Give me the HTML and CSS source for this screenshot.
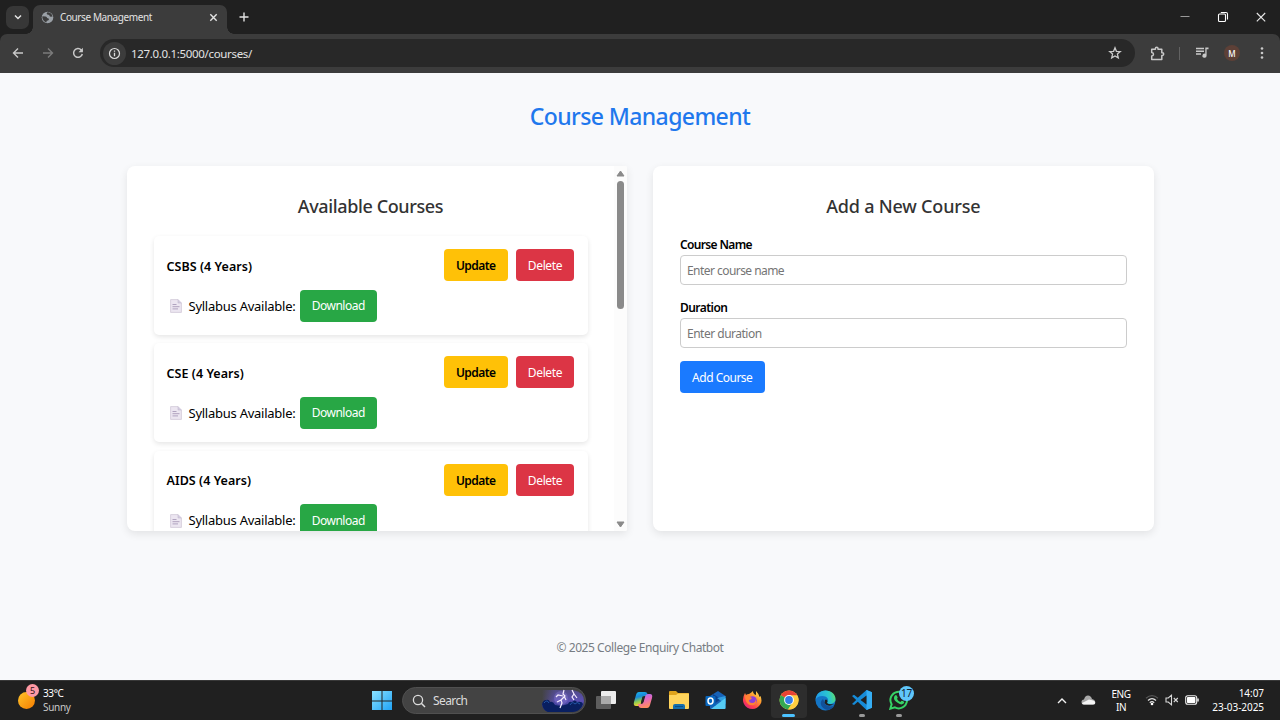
FILE: index.html
```html
<!DOCTYPE html>
<html lang="en">
<head>
<meta charset="utf-8">
<title>Course Management</title>
<link rel="stylesheet" href="styles.css">
</head>
<body>
<div class="screen">
  <div class="tabstrip">
    <div class="tab-search"><svg width="10" height="10" viewBox="0 0 10 10"><path d="M2 3.500l3 3 3-3" fill="none" stroke="#e3e3e3" stroke-width="1.500"/></svg></div>
    <div class="tab">
      <svg class="favicon" width="13" height="13" viewBox="0 0 13 13"><circle cx="6.500" cy="6.500" r="5.800" fill="#9aa0a6"/><path d="M1.500 5.300l3 .2q1.700.2 1.500 1.500l1.600.4q1 1.200-.5 2l-1.300.3-.5 1.700Q1.500 10 1.300 6zM6 1.500q-.8 1.700.3 2.100l1.900.3q.3 1.700 1.500 1.800l1.900-.2Q10.500 1.800 7.200 1.300z" fill="#3c3c3c"/></svg>
      <span class="tab-title">Course Management</span>
      <svg class="tab-close" width="9" height="9" viewBox="0 0 9 9"><path d="M1.300 1.300l6.400 6.400M7.700 1.300L1.300 7.700" stroke="#e3e3e3" stroke-width="1.400"/></svg>
    </div>
    <svg class="new-tab" width="10" height="10" viewBox="0 0 10 10"><path d="M5 .5v9M.5 5h9" stroke="#e3e3e3" stroke-width="1.400"/></svg>
    <div class="win-controls">
      <svg width="12" height="12" viewBox="0 0 12 12"><path d="M1.500 5.500h9" stroke="#999"/></svg>
      <svg width="12" height="12" viewBox="0 0 12 12"><rect x="1.500" y="3" width="7" height="7.500" rx="1" fill="none" stroke="#fff" stroke-width="1.100"/><path d="M3.800 1.500h5.200a1.500 1.500 0 0 1 1.500 1.500v5.500" fill="none" stroke="#fff" stroke-width="1.100"/></svg>
      <svg width="12" height="12" viewBox="0 0 12 12"><path d="M1.800 2l8.400 8.400M10.200 2L1.800 10.400" stroke="#e8e8e8" stroke-width="1.100"/></svg>
    </div>
  </div>
  <div class="toolbar">
    <div class="nav-icons">
      <svg width="12" height="12" viewBox="0 0 12 12"><path d="M11 6H1.500M6 1.500L1.500 6 6 10.500" fill="none" stroke="#c9c9c9" stroke-width="1.400"/></svg>
      <svg width="12" height="12" viewBox="0 0 12 12"><path d="M1 6h9.500M6 1.500L10.500 6 6 10.500" fill="none" stroke="#7b7b7b" stroke-width="1.400"/></svg>
      <svg width="12" height="12" viewBox="0 0 12 12"><path d="M10.300 7A4.400 4.400 0 1 1 9.200 2.900L10.500 4.200" fill="none" stroke="#c9c9c9" stroke-width="1.500"/><path d="M10.900 .8v4.400H6.500z" fill="#c9c9c9"/></svg>
    </div>
    <div class="address">
      <span class="site-info"><svg width="13" height="13" viewBox="0 0 13 13"><circle cx="6.500" cy="6.500" r="5" fill="none" stroke="#dedede" stroke-width="1.200"/><path d="M6.500 5.800v3.500M6.500 3.500v1.300" stroke="#dedede" stroke-width="1.300"/></svg></span>
      <span class="url">127.0.0.1:5000/courses/</span>
      <svg class="star" width="14" height="14" viewBox="0 0 14 14"><path d="M7 1.800l1.400 3.500 3.900.3-2.900 2.500.9 3.800L7 9.900l-3.300 2 .9-3.800-2.900-2.500 3.900-.3z" fill="none" stroke="#c9c9c9" stroke-width="1.300"/></svg>
    </div>
    <div class="tools">
      <svg width="15" height="15" viewBox="0 0 15 15"><path d="M1.700 3.200h3.700v-.6a1.300 1.300 0 0 1 2.600 0v.6h3.800v3.600h.6a1.300 1.300 0 0 1 0 2.600h-.6v4H1.700v-3.400c2.400-.3 2.400-3.200 0-3.500z" fill="none" stroke="#c9c9c9" stroke-width="1.500" stroke-linejoin="round"/></svg>
      <span class="divider"></span>
      <svg class="media" width="14" height="14" viewBox="0 0 14 14"><path d="M1 2.500h8M1 5.200h8M1 7.900h5" stroke="#c9c9c9" stroke-width="1.500"/><path d="M10.300 1.500h3.200v1.700h-1.900v6.500a2.100 2.100 0 1 1-1.300-1.900z" fill="#c9c9c9"/></svg>
      <span class="profile">M</span>
      <svg class="kebab" width="4" height="14" viewBox="0 0 4 14"><g fill="#c9c9c9"><circle cx="2" cy="2.500" r="1.300"/><circle cx="2" cy="7" r="1.300"/><circle cx="2" cy="11.500" r="1.300"/></g></svg>
    </div>
  </div>

  <main class="page">
    <h1 class="page-title">Course Management</h1>
    <div class="columns">
      <section class="card courses">
        <div class="course-list">
          <h2 class="card-title">Available Courses</h2>
          <article class="course">
            <div class="course-head"><strong class="course-name">CSBS (4 Years)</strong><button class="btn update">Update</button><button class="btn delete">Delete</button></div>
            <div class="syllabus"><svg class="doc" width="12" height="14" viewBox="0 0 12 14"><g id="document"><path d="M.6.600h7.400l3.400 3.400v9.400H.600z" fill="#ece6f1" stroke="#d0c8d8" stroke-width=".8"/><path d="M8 .600v3.400h3.400" fill="#d5cce0" stroke="#c5bcd0" stroke-width=".6"/><path d="M2.500 5.500h4M2.500 7.700h7M2.500 9.900h5.500" stroke="#a99bb9" stroke-width=".9"/></g></svg><span class="syllabus-text">Syllabus Available:</span><button class="btn download">Download</button></div>
          </article>
          <article class="course">
            <div class="course-head"><strong class="course-name">CSE (4 Years)</strong><button class="btn update">Update</button><button class="btn delete">Delete</button></div>
            <div class="syllabus"><svg class="doc" width="12" height="14" viewBox="0 0 12 14"><use href="#document"/></svg><span class="syllabus-text">Syllabus Available:</span><button class="btn download">Download</button></div>
          </article>
          <article class="course">
            <div class="course-head"><strong class="course-name">AIDS (4 Years)</strong><button class="btn update">Update</button><button class="btn delete">Delete</button></div>
            <div class="syllabus"><svg class="doc" width="12" height="14" viewBox="0 0 12 14"><use href="#document"/></svg><span class="syllabus-text">Syllabus Available:</span><button class="btn download">Download</button></div>
          </article>
        </div>
        <div class="scrollbar">
          <svg width="9" height="8" viewBox="0 0 9 8"><path d="M4.500 1L8 6H1z" fill="#8a8a8a" stroke="#8a8a8a" stroke-linejoin="round"/></svg>
          <span class="thumb"></span>
          <svg class="arrow-down" width="9" height="8" viewBox="0 0 9 8"><path d="M4.500 7L8 2H1z" fill="#8a8a8a" stroke="#8a8a8a" stroke-linejoin="round"/></svg>
        </div>
      </section>
      <section class="card form-card">
        <h2 class="card-title">Add a New Course</h2>
        <form class="course-form">
          <label class="label label-name" for="name">Course Name</label>
          <input class="input input-name" id="name" placeholder="Enter course name">
          <label class="label label-duration" for="duration">Duration</label>
          <input class="input input-duration" id="duration" placeholder="Enter duration">
          <button class="btn add" type="button">Add Course</button>
        </form>
      </section>
    </div>
    <footer class="footer">© 2025 College Enquiry Chatbot</footer>
  </main>

  <div class="taskbar">
    <div class="weather">
      <div class="sun"><span class="badge">5</span></div>
      <div class="weather-text"><span class="temp">33°C</span><span class="sky">Sunny</span></div>
    </div>
    <div class="apps">
      <svg class="start" width="20" height="20" viewBox="0 0 20 20"><defs><linearGradient id="win" x2="1" y2="1"><stop stop-color="#8be2ff"/><stop offset="1" stop-color="#1fa2f5"/></linearGradient></defs><path d="M0 0h9.500v9.500H0zM10.500 0H20v9.500h-9.500zM0 10.500h9.500V19H0zM10.500 10.500H20V19h-9.500z" fill="url(#win)"/></svg>
      <div class="search">
        <svg width="14" height="14" viewBox="0 0 14 14"><circle cx="6" cy="6" r="4.600" fill="none" stroke="#ddd" stroke-width="1.300"/><path d="M9.300 9.300L13 13" stroke="#ddd" stroke-width="1.500"/></svg>
        <span class="search-text">Search</span>
        <svg class="storm" width="42" height="24" viewBox="0 0 42 24"><defs><linearGradient id="night" x2="0" y2="1"><stop stop-color="#514b86"/><stop offset=".5" stop-color="#5b50b5"/><stop offset="1" stop-color="#18276e"/></linearGradient><linearGradient id="fade"><stop stop-color="#434343"/><stop offset="1" stop-color="#434343" stop-opacity="0"/></linearGradient></defs><path d="M0 1h31q11 2 11 11t-11 11H6q-6-2-6-9z" fill="url(#night)"/><path d="M0 0h14v14H0z" fill="url(#fade)"/><circle cx="19" cy="9" r="7" fill="#9385d8" opacity=".35"/><path d="M0 15q1-4 4-4 3-1 4 2 3-1 5 3 6 2 13-1 1-3 4-2 3-3 5 0 5-1 6 2-2 7-11 8H6q-5-2-6-8" fill="#091f60"/><path d="M2 14q3-4 5 0M28 16q2-4 5-1 2-3 5 0" stroke="#2457a7" fill="none"/><path d="M22 1l-1 4 2 2-4 4 1 3-2 5M21 7l-5-1-2 2M19 11l-4 2M22 7l2 4M30 1l2 4-2 3 2 3M32 5l3 4" fill="none" stroke="#f6edff" stroke-width="1.200"/></svg>
      </div>
      <span class="app"><svg width="22" height="20" viewBox="0 0 22 20"><rect x="6" y="1" width="15" height="13" rx="1" fill="#ececec"/><rect x="1" y="6" width="15" height="13" rx="1" fill="#696969" opacity=".85"/><path d="M6 6h10v8H6z" fill="#aaa"/></svg></span>
      <span class="app"><svg width="20" height="20" viewBox="0 0 20 20"><defs><linearGradient id="cpa" x2=".3" y2="1"><stop stop-color="#1cb8ed"/><stop offset=".4" stop-color="#1789d9"/><stop offset=".7" stop-color="#8acb54"/><stop offset="1" stop-color="#ffd02f"/></linearGradient><linearGradient id="cpb" x2=".3" y2="1"><stop stop-color="#9970ff"/><stop offset=".5" stop-color="#e568bd"/><stop offset="1" stop-color="#ff8a61"/></linearGradient></defs><path d="M6 2h6q2 0 2.500 2l.7 2H12q-2 0-2.600 2L8 13q-.7 3-3 3H3q-3 0-2-4l2-7q.700-3 3-3z" fill="url(#cpa)"/><path d="M14 18H8q-2 0-2.500-2L5 14h3q2 0 2.600-2L12 7q.700-3 3-3h2q3 0 2 4l-2 7q-.7 3-3 3z" fill="url(#cpb)"/><path d="M9.500 6.500h2L9.800 13H7.900z" fill="#252525"/></svg></span>
      <span class="app"><svg width="22" height="20" viewBox="0 0 22 20"><path d="M1 2q0-1 1-1h6l2 2h10q1 0 1 1v14H1z" fill="#dfa31c"/><path d="M1 5h7l2-1.500h11V18q0 1-1 1H2q-1 0-1-1z" fill="#ffd45c"/><path d="M5 19v-3q0-2 2-2h8q2 0 2 2v3z" fill="#166fad"/><path d="M7 16h8v1H7z" fill="#0b4f87"/></svg></span>
      <span class="app"><svg width="21" height="20" viewBox="0 0 21 20"><path d="M5 6l8-5 7.500 5v12q0 1-1 1H6q-1 0-1-1z" fill="#1762b7"/><path d="M8 4l8 5-8 6z" fill="#0b418e"/><path d="M12 8l8.500-2v8z" fill="#2e9cdf"/><path d="M6 19l14.500-11v10q0 1-1 1z" fill="#55cbf4"/><rect x=".5" y="6" width="10" height="10" rx="1" fill="#0866bd"/><ellipse cx="5.500" cy="11" rx="2.500" ry="2.900" fill="none" stroke="#fff" stroke-width="1.500"/></svg></span>
      <span class="app"><svg width="20" height="20" viewBox="0 0 20 20"><defs><linearGradient id="fx" x1="1" x2=".2" y2="1"><stop stop-color="#fff36a"/><stop offset=".4" stop-color="#ff9a2c"/><stop offset=".75" stop-color="#ff3d4f"/><stop offset="1" stop-color="#dc247f"/></linearGradient></defs><path d="M3 3l1 2q1-1 3-1 2-1 4-3 0 3 3 4V1q3 3 3.500 6l1-1q2 5 0 8-3 5-8 5-6 0-8.500-5Q-.5 9 3 3z" fill="url(#fx)"/><circle cx="10.500" cy="10.500" r="4.300" fill="#8b3fda"/><path d="M3 6q3-2 5 1l2 1q-1 2-3 2 0 3 3 3 4 0 3.500-4 2 4-1.500 6-4 1-6-1-3-3-3-8" fill="#ff8234"/></svg></span>
      <span class="app active"><svg width="20" height="20" viewBox="0 0 20 20"><circle cx="10" cy="10" r="9.500" fill="#ffcd40"/><path d="M10 10L1.800 5.200A9.500 9.500 0 0 1 18.200 5.200z" fill="#e94335"/><path d="M10 10L1.800 5.200A9.500 9.500 0 0 0 9 19.500L14 12z" fill="#34a853"/><path d="M10 5.300h8.300A9.500 9.500 0 0 1 9 19.500L14 12z" fill="#ffcd40"/><circle cx="10" cy="10" r="4.900" fill="#fff"/><circle cx="10" cy="10" r="3.900" fill="#347de9"/></svg></span>
      <span class="app"><svg width="21" height="21" viewBox="0 0 21 21"><defs><linearGradient id="edge" y1=".2" x2="1"><stop stop-color="#209ce9"/><stop offset=".6" stop-color="#2bc7cf"/><stop offset="1" stop-color="#66e15b"/></linearGradient></defs><circle cx="10.500" cy="10.500" r="10" fill="#1475c5"/><path d="M.500 10C1 4 5 .500 10.500.500c6 0 10 4 10 8.500 0 3.500-3 5-6 5-2 0-3-1-2-2 2-3-1-6-5-6-3.500 0-6 1.500-7 4z" fill="url(#edge)"/><path d="M8 9c-5 4-1 10 5 11 3-.5 5-2 6.500-4.500C14 18 9 15 9 11z" fill="#125199"/><path d="M10 10q1-1 2 0 1 1 0 3 2 2 7 1-6 4-9.500-1z" fill="#202020"/></svg></span>
      <span class="app running"><svg width="20" height="20" viewBox="0 0 20 20"><path d="M14.500 0L20 2.300v15.400L14.500 20 5.800 11.800 2 15 0 14l4.200-4L0 6l2-1.300 3.800 3z" fill="#168bd8"/><path d="M14.500 0L20 2.300v15.400L14.500 20z" fill="#36aef4"/><path d="M14.500 5.500v9L8.500 10z" fill="#202020"/></svg></span>
      <span class="app running whatsapp"><svg width="20" height="20" viewBox="0 0 20 20"><path d="M1.300 18.700l1.300-4.400a8.300 8.300 0 1 1 3.300 3.100z" fill="#202020" stroke="#36d366" stroke-width="2"/><path d="M6 5.500q1-1 1.700 0l1 2q0 .8-.8 1.300 1.300 2.500 3.500 3.200l1-1q.7-.5 2.600.8.700.700-.4 1.800-2 2-6-.8T5 8q0-1.800 1-2.500z" fill="#36d366"/></svg><span class="count">17</span></span>
    </div>
    <div class="tray">
      <svg class="chevron" width="10" height="8" viewBox="0 0 10 8"><path d="M1 6l4-4 4 4" fill="none" stroke="#f1f1f1" stroke-width="1.400"/></svg>
      <svg class="cloud" width="15" height="10" viewBox="0 0 15 10"><path d="M3 9.500Q.5 9.500.5 7T3 4.500Q4 .500 7 .500t4 3.500q3 .5 3.300 3 0 2.500-2.300 2.500z" fill="#a9a9a9"/><path d="M1 8l5-2.500 2-1 4 1q2.500.5 2.300 2.500Q14 9.500 12 9.500H3Q1.300 9.500 1 8z" fill="#f5f5f5"/></svg>
      <div class="lang"><span>ENG</span><span>IN</span></div>
      <div class="status">
        <svg width="14" height="12" viewBox="0 0 14 12"><path d="M1 4.300q6-5.300 12 0" fill="none" stroke="#555" stroke-width="1.200"/><path d="M3 6.500q4-3.800 8 0M4.800 8.700q2.200-2 4.400 0" fill="none" stroke="#e3e3e3" stroke-width="1.200"/><circle cx="7" cy="10" r="1.300" fill="#fff"/></svg>
        <svg width="14" height="12" viewBox="0 0 14 12"><path d="M1 4h2.300L6.500 1.200v9.600L3.300 8H1z" fill="none" stroke="#d8d8d8" stroke-width="1.100"/><path d="M8.800 4l4 4M12.800 4l-4 4" stroke="#d8d8d8" stroke-width="1.100"/></svg>
        <svg width="14" height="12" viewBox="0 0 14 12"><rect x=".7" y="1.700" width="11" height="8.600" rx="2" fill="none" stroke="#eee" stroke-width="1.100"/><rect x="2" y="3" width="8.400" height="6" rx=".8" fill="#fff"/><path d="M13 4.500v3" stroke="#eee" stroke-width="1.500"/></svg>
      </div>
      <div class="clock"><span class="time">14:07</span><span class="date">23-03-2025</span></div>
    </div>
  </div>
</div>
</body>
</html>
```
FILE: styles.css
```css
* { box-sizing: border-box; }
body { margin: 0; background: #202020; font-family: "Noto Sans", "Open Sans", sans-serif; }
svg { display: block; flex-shrink: 0; }
.screen { width: 1280px; height: 720px; display: flex; flex-direction: column; overflow: hidden; }

/* Browser frame */
.tabstrip { height: 34px; display: flex; align-items: center; padding: 0 13px 0 6px; background: #202020; }
.tab-search { width: 23px; height: 23px; border-radius: 7px; background: #373737; display: grid; place-items: center; }
.tab { position: relative; align-self: flex-end; width: 194px; height: 29px; margin-left: 4px; padding: 0 9px 5px 8px; display: flex; align-items: center; background: #3c3c3c; border-radius: 7px 7px 0 0; color: #e3e3e3; font-size: 10px; }
.tab::before, .tab::after { content: ""; position: absolute; bottom: 0; width: 7px; height: 7px; }
.tab::before { left: -7px; background: radial-gradient(circle at 0 0, transparent 6.500px, #3c3c3c 7px); }
.tab::after { right: -7px; background: radial-gradient(circle at 100% 0, transparent 6.500px, #3c3c3c 7px); }
.tab-title { margin-left: 6px; letter-spacing: -.4px; }
.tab-close { margin-left: auto; }
.new-tab { margin-left: 12px; }
.win-controls { margin-left: auto; display: flex; gap: 26px; }
.toolbar { height: 39px; display: flex; align-items: center; background: #3c3c3c; border-radius: 7px 7px 0 0; padding: 0 16px 1px 12px; }
.nav-icons { display: flex; gap: 18px; margin-right: 16px; }
.address { width: 1035px; height: 28px; border-radius: 14px; background: #282828; display: flex; align-items: center; padding: 0 13px 0 3px; }
.site-info { width: 23px; height: 23px; border-radius: 50%; background: #3c3c3c; display: grid; place-items: center; }
.url { margin-left: 5px; color: #e3e3e3; font-size: 11.500px; letter-spacing: -.33px; }
.star { margin-left: auto; }
.tools { display: flex; align-items: center; margin-left: 15px; }
.divider { width: 1px; height: 13px; margin: 0 15px 0 14px; background: #626262; }
.profile { width: 16px; height: 16px; margin: 0 20px 0 15px; border-radius: 50%; background: #5d4037; color: #fff; display: grid; place-items: center; font-size: 8px; font-weight: 500; }

/* Course page */
.page { height: 607px; flex: none; background: #f8f9fb; display: flex; flex-direction: column; align-items: center; padding-top: 26px; }
.page-title { margin: 0; height: 34px; line-height: 34px; color: #1f78ed; font-size: 23px; font-weight: 500; letter-spacing: -.6px; }
.columns { display: flex; gap: 26px; margin-top: 33px; }
.card { width: 500.500px; height: 365px; border-radius: 8px; background: #fff; box-shadow: 0 3px 9px rgba(0,0,0,.09); }
.courses { display: flex; overflow: hidden; border-radius: 8px 2px 2px 8px; }
.course-list { width: 487px; padding: 26px 26px 0 27px; overflow: hidden; }
.card-title { margin: 0; height: 29px; line-height: 29px; text-align: center; color: #333; font-size: 18px; font-weight: 500; letter-spacing: -.38px; }
.course-list .card-title { margin-bottom: 15px; }
.form-card .card-title { letter-spacing: -.2px; }
.course { height: 99px; margin-bottom: 8.300px; padding: 13px 13.500px 0 13px; border-radius: 5px; box-shadow: 0 2px 5px rgba(0,0,0,.1); }
.course-head { display: flex; align-items: center; }
.course-name { margin-right: auto; padding-top: 2px; font-size: 12.500px; font-weight: 600; letter-spacing: .05px; }
.btn { height: 32px; padding: 0; border: 0; border-radius: 4px; color: #fff; font: 400 12px "Noto Sans", "Open Sans", sans-serif; letter-spacing: -.35px; white-space: nowrap; }
.update { width: 63.500px; padding-top: 1px; background: #ffc107; color: #000; font-weight: 600; letter-spacing: -.55px; }
.delete { width: 58px; padding-top: 1px; margin-left: 8.500px; background: #dc3545; }
.syllabus { display: flex; align-items: center; margin-top: 8.700px; }
.doc { margin: 1px 7px 0 3px; }
.syllabus-text { width: 111px; font-size: 13px; letter-spacing: -.25px; white-space: nowrap; }
.download { width: 77.500px; background: #28a745; letter-spacing: -.5px; }
.scrollbar { width: 13.500px; padding: 4px 0 3px; background: #fcfcfc; display: flex; flex-direction: column; align-items: center; }
.thumb { width: 7px; height: 128px; margin-top: 3px; border-radius: 4px; background: #8a8a8a; }
.arrow-down { margin-top: auto; }
.form-card { padding: 26px 26.500px; }
.course-form { display: flex; flex-direction: column; align-items: flex-start; margin-top: 14px; }
.label { height: 20px; padding-left: .5px; line-height: 19px; font-size: 12px; font-weight: 600; letter-spacing: -.65px; }
.input { width: 100%; height: 30px; padding: 1px 6.500px 0; border: 1px solid #ccc; border-radius: 4px; background: #fff; font: 12px "Noto Sans", "Open Sans", sans-serif; letter-spacing: -.55px; }
.input::placeholder { color: #757575; }
.label-duration { margin-top: 13px; letter-spacing: -.55px; }
.input-duration { letter-spacing: -.5px; }
.add { width: 85.500px; margin-top: 13.300px; background: #1a7aff; letter-spacing: -.5px; }
.footer { margin-top: 107px; height: 20px; line-height: 20px; color: #777d83; font-size: 12px; letter-spacing: -.43px; }

/* Taskbar */
.taskbar { height: 40px; display: flex; align-items: center; background: #202020; border-top: 1px solid #383838; color: #fff; font-size: 10px; line-height: 13px; }
.weather { width: 371.500px; display: flex; align-items: center; padding-left: 18px; }
.sun { position: relative; width: 17px; height: 17px; border-radius: 50%; background: linear-gradient(135deg, #ffc42a, #f57c00); }
.badge { position: absolute; left: 8px; top: -8px; width: 13px; height: 13px; border-radius: 50%; background: #ff99a4; color: #301014; text-align: center; font-size: 9px; }
.weather-text { display: flex; flex-direction: column; margin-left: 8px; letter-spacing: -.4px; }
.temp, .time { position: relative; top: -1px; }
.sky { color: #c9c9c9; letter-spacing: -.3px; }
.apps { display: flex; align-items: center; }
.search { width: 184px; height: 27px; margin: 0 2px 0 10.500px; padding: 0 1px 0 9px; display: flex; align-items: center; border: 1px solid #505050; border-radius: 14px; background: #434343; }
.search-text { margin-left: 7px; color: #dcdcdc; font-size: 12px; letter-spacing: -.6px; }
.storm { margin-left: auto; }
.app { position: relative; width: 36.550px; height: 34px; padding-bottom: 1px; display: grid; place-items: center; }
.active { background: #2d2d2d; border-radius: 4px; }
.active::after, .running::after { content: ""; position: absolute; bottom: 1px; left: 50%; margin-left: -3px; width: 6px; height: 3px; border-radius: 2px; background: #999; }
.active::after { width: 13px; margin-left: -7px; background: #4cc2ff; }
.count { position: absolute; right: 3px; top: 2px; width: 15px; height: 15px; border-radius: 50%; background: #60c7fb; color: #102030; text-align: center; line-height: 14px; letter-spacing: -.4px; }
.tray { flex: 1; display: flex; align-items: center; padding-right: 16px; }
.chevron { margin-left: auto; }
.cloud { margin-left: 14px; margin-bottom: 1px; }
.lang { width: 22px; margin-left: 14px; display: flex; flex-direction: column; align-items: center; letter-spacing: -.4px; }
.status { display: flex; gap: 6px; margin: 0 0 1px 13px; }
.clock { width: 65px; display: flex; flex-direction: column; align-items: flex-end; letter-spacing: -.05px; }
```
